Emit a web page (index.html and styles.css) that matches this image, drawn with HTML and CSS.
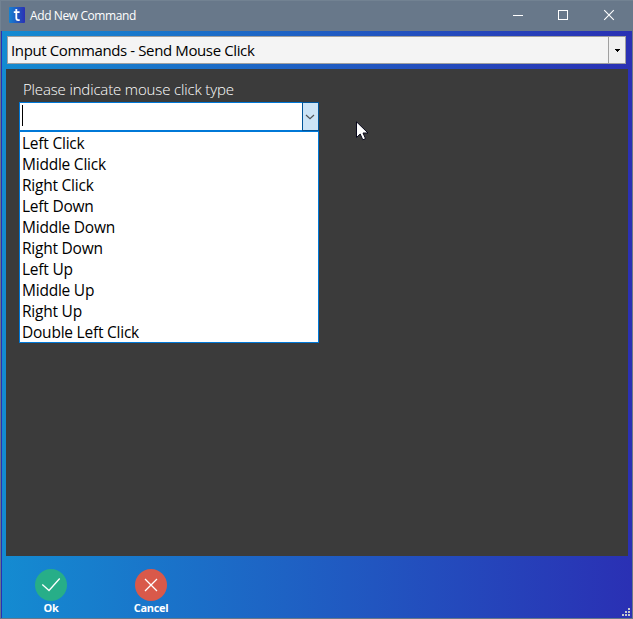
FILE: index.html
```html
<!DOCTYPE html>
<html lang="en">
<head>
<meta charset="utf-8">
<title>Add New Command</title>
<link rel="stylesheet" href="styles.css">
</head>
<body>
<div class="window">
  <header class="titlebar">
    <svg class="logo" width="16" height="16" viewBox="0 0 16 16"><defs><linearGradient id="g"><stop offset="0" stop-color="#1682d0"/><stop offset="1" stop-color="#2a30b4"/></linearGradient></defs><rect width="16" height="16" rx="1" fill="url(#g)"/><path d="M7.3 2V10.8Q7.3 13.2 9.2 13.2H10.7M4.8 5.2H10.6" fill="none" stroke="#fff" stroke-width="1.8"/></svg>
    <h1 class="title"><span>Add New Command</span></h1>
    <div class="controls">
      <svg width="46" height="30"><path d="M18 14.5H28" stroke="#fff"/></svg>
      <svg width="45" height="30"><rect x="17.5" y="9.5" width="9" height="9" fill="none" stroke="#fff"/></svg>
      <svg width="46" height="30"><path d="M18.2 9.2L27.8 18.8M27.8 9.2L18.2 18.8" stroke="#fff" stroke-width="1.1"/></svg>
    </div>
  </header>
  <main class="body">
    <div class="command"><span class="command-text">Input Commands - Send Mouse Click</span><span class="command-arrow"><svg width="6" height="3" shape-rendering="crispEdges"><path d="M0 0H5V1H4V2H3V3H2V2H1V1H0Z"/></svg></span></div>
    <section class="panel">
      <label class="label"><span>Please indicate mouse click type</span></label>
      <div class="combo"><i class="caret"></i><span class="combo-arrow"><svg width="10" height="6"><path d="M1 1L5 4.7L9 1" fill="none" stroke="#505559" stroke-width="1.2"/></svg></span></div>
      <ul class="list">
        <li>Left Click</li><li>Middle Click</li><li>Right Click</li><li>Left Down</li><li>Middle Down</li><li>Right Down</li><li>Left Up</li><li>Middle Up</li><li>Right Up</li><li>Double Left Click</li>
      </ul>
      <svg class="cursor" width="13" height="21" viewBox="0 0 13 21"><path d="M.5 .8V16.5L4.2 13L6.8 18.8L9.5 17.6L7 12H12Z" fill="#fff" stroke="#08081c"/></svg>
    </section>
    <footer class="actions">
      <div class="action"><svg width="32" height="32"><circle cx="16" cy="16" r="16" fill="#27ae88"/><path d="M7.3 15.5L14 21.5L24.7 9.5" fill="none" stroke="#fff" stroke-width="1.3"/></svg><span>Ok</span></div>
      <div class="action"><svg width="32" height="32"><circle cx="16" cy="16" r="16" fill="#d9594a"/><path d="M10 10L22 22M22 10L10 22" stroke="#fff" stroke-width="1.3"/></svg><span>Cancel</span></div>
      <svg class="grip" width="8" height="8" fill="#c6c8cc"><path d="M6 0h2v2h-2zM3 3h2v2h-2zM6 3h2v2h-2zM0 6h2v2h-2zM3 6h2v2h-2zM6 6h2v2h-2z"/></svg>
    </footer>
  </main>
</div>
</body>
</html>
```
FILE: styles.css
```css
* { box-sizing: border-box; }
body { margin: 0; font-family: "Open Sans", "Noto Sans", sans-serif; font-size: 15px; }
.window { width: 633px; height: 619px; display: flex; flex-direction: column; background: #68788a; }
.titlebar { height: 31px; flex: none; display: flex; align-items: flex-start; border-top: 1px solid #728292; border-left: 1px solid #728292; color: #fff; }
.logo { margin: 6px 0 0 8px; }
.title { margin: 6px 0 0 5px; font-size: 12px; line-height: 17px; font-weight: 400; letter-spacing: -0.4px; }
.controls { margin-left: auto; display: flex; padding-right: 1px; }
.body { height: 587px; margin: 0 1px 1px; border-left: 1px solid #2a30b4; padding: 5px 4px 0; display: flex; flex-direction: column; background: linear-gradient(to right, #148bd1, #2a30b4); }
.command { height: 28px; flex: none; margin: 0 2px 0 1px; display: flex; border: 1px solid #a0a0a0; background: #f4f4f4; line-height: 27px; padding-left: 3px; }
.command-text { flex: 1; letter-spacing: -0.38px; }
.command-arrow { width: 17px; border-left: 1px solid #a0a0a0; background: #f0f0f0; display: flex; align-items: center; justify-content: center; padding-left: 1px; }
.panel { position: relative; height: 487px; flex: none; margin-top: 5px; padding: 10px 13px; background: #3b3b3b; }
.label { display: block; height: 23px; padding-left: 4px; line-height: 21px; color: #fff; font-weight: 300; letter-spacing: -0.15px; }
.combo { width: 300px; height: 29px; border: 1px solid #0078d7; background: #fff; display: flex; align-items: stretch; }
.caret { width: 1px; height: 21px; margin: 2px 0 0 2px; background: #000; }
.combo-arrow { width: 17px; margin: -1px -1px -1px auto; padding-right: 1px; border: 1px solid #005499; background: #cce4f7; display: flex; align-items: center; justify-content: center; }
.list { margin: 0; padding: 1px 0 0 2px; width: 300px; height: 212px; border: 1px solid #0078d7; background: #fff; list-style: none; font-size: 15.5px; letter-spacing: -0.23px; line-height: 21px; }
.cursor { position: absolute; left: 350px; top: 52px; }
.actions { position: relative; flex: 1; display: flex; gap: 36px; padding: 13px 0 0 13px; }
.action { width: 64px; display: flex; flex-direction: column; align-items: center; color: #fff; font-size: 11px; font-weight: 700; line-height: 14px; letter-spacing: -0.3px; }
.grip { position: absolute; right: -2px; bottom: 2px; }
```
